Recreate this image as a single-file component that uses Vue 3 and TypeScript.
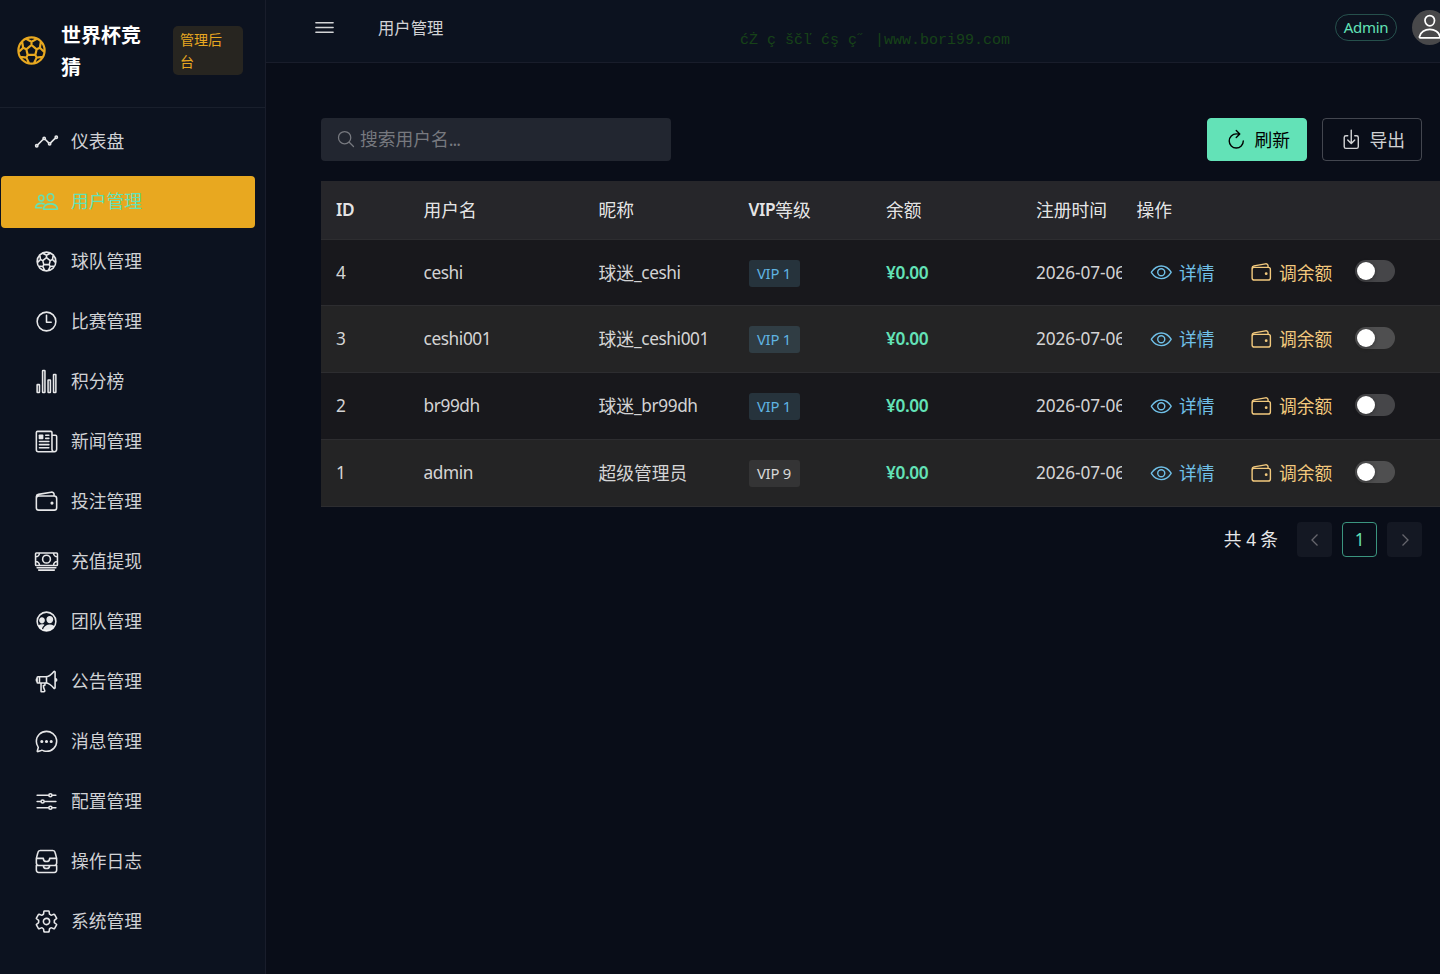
<script setup lang="ts">
import { ref } from 'vue'

interface Glyph {
  line: string
  fill?: string
  width?: number
}

interface User {
  id: number
  name: string
  nick: string
  vip: number
  balance: string
  created: string
}

const dot = (cx: number, cy: number, r: number): string =>
  `M${cx - r} ${cy}a${r} ${r} 0 1 0 ${2 * r} 0a${r} ${r} 0 1 0 ${-2 * r} 0z`

const glyphs: Record<string, Glyph> = {
  analytics: {
    line: 'M344 280l88-88M232 216l64 64M80 320l104-104' + dot(456, 168, 24) + dot(320, 304, 24) + dot(208, 192, 24) + dot(56, 344, 24),
  },
  people: {
    line: 'M402 168c-2.93 40.67-33.1 72-66 72s-63.12-31.32-66-72c-3-42.31 26.37-72 66-72s69 30.46 66 72zM336 304c-65.17 0-127.84 32.37-143.54 95.41-2.08 8.34 3.15 16.59 11.72 16.59h263.65c8.57 0 13.77-8.25 11.72-16.59C463.85 335.36 401.18 304 336 304zM200 185.94c-2.34 32.48-26.72 58.06-53 58.06s-50.7-25.57-53-58.06C91.61 152.15 115.34 128 147 128s55.39 24.77 53 57.94zM206 306c-18.05-8.27-37.93-11.45-59-11.45-52 0-102.1 25.85-114.65 76.2-1.65 6.66 2.53 13.25 9.37 13.25H154',
  },
  football: {
    line: dot(256, 256, 192) + 'M256 175l-76 64 20 81h112l20-81zM256 175v-47M177 86l79 42 79-42M332 239l46-23M393 128l-15 88 65 63M180 239l-46-23M119 128l15 88-65 63M312 320l19 40M420 347l-89 13-39 81M200 320l-19 40M92 347l89 13 39 81',
  },
  time: { line: dot(256, 256, 192) + 'M256 128v144h96' },
  chart: {
    line: 'M72 320h32a8 8 0 018 8v144a8 8 0 01-8 8H72a8 8 0 01-8-8V328a8 8 0 018-8zM296 224h32a8 8 0 018 8v240a8 8 0 01-8 8h-32a8 8 0 01-8-8V232a8 8 0 018-8zM408 112h32a8 8 0 018 8v352a8 8 0 01-8 8h-32a8 8 0 01-8-8V120a8 8 0 018-8zM184 32h32a8 8 0 018 8v432a8 8 0 01-8 8h-32a8 8 0 01-8-8V40a8 8 0 018-8z',
  },
  news: {
    line: 'M368 415.86V72a24.07 24.07 0 00-24-24H72a24.07 24.07 0 00-24 24v352a40.12 40.12 0 0040 40h328M416 464h0a48 48 0 01-48-48V128h72a24 24 0 0124 24v264a48 48 0 01-48 48zM240 128h64M240 192h64M112 256h192M112 320h192M112 384h192',
    fill: 'M176 208h-64a16 16 0 01-16-16v-64a16 16 0 0116-16h64a16 16 0 0116 16v64a16 16 0 01-16 16z',
  },
  wallet: {
    line: 'M96 144h320a48 48 0 0148 48v192a48 48 0 01-48 48H96a48 48 0 01-48-48V192a48 48 0 0148-48zM411.36 144v-30A50 50 0 00352 64.9L88.64 109.85A50 50 0 0048 159v49',
    fill: 'M368 320a32 32 0 1132-32 32 32 0 01-32 32z',
  },
  cash: {
    line: 'M48 80h416a16 16 0 0116 16v224a16 16 0 01-16 16H48a16 16 0 01-16-16V96a16 16 0 0116-16zM64 384h384M96 432h320M480 160a80 80 0 01-80-80M32 160a80 80 0 0080-80M480 256a80 80 0 00-80 80M32 256a80 80 0 0180 80' + dot(256, 208, 80),
  },
  team: {
    line: dot(256, 256, 192),
    fill: 'M323.67 292c-17.4 0-34.21-7.72-47.34-21.73a83.76 83.76 0 01-22-51.32c-1.47-20.7 4.88-39.75 17.88-53.62S303.38 144 323.67 144c20.14 0 38.37 7.62 51.33 21.46s19.47 33 18 53.51a84 84 0 01-22 51.3C357.86 284.28 341.06 292 323.67 292zM163.82 295.36c-29.76 0-55.93-27.51-58.33-61.33-1.23-17.32 4.15-33.33 15.17-45.08s26.22-18 43.15-18 32.12 6.44 43.07 18.14 16.5 27.82 15.25 45c-2.44 33.77-28.6 61.27-58.31 61.27zM420.37 355.28c-1.59-4.7-5.46-9.71-13.22-14.46-23.46-14.33-52.32-21.91-83.48-21.91-30.57 0-60.23 7.9-83.53 22.25-26.25 16.17-43.89 39.75-51 68.18-1.68 6.69-4.13 19.14-1.51 26.11a192.18 192.18 0 00232.75-80.17zM163.63 401.37c7.07-28.21 22.12-51.73 45.47-70.75a8 8 0 00-2.59-13.77c-12-3.83-25.7-5.88-42.69-5.88-23.82 0-49.11 6.45-68.14 18.17-5.4 3.33-10.7 4.61-14.78 5.75a192.84 192.84 0 0077.78 86.64l1.79-.14a102.82 102.82 0 013.16-20.02z',
  },
  megaphone: {
    line: 'M407.94 52.22S321.3 160 240 160H80a16 16 0 00-16 16v96a16 16 0 0016 16h160c81.3 0 167.94 108.23 167.94 108.23 6.06 8 24.06 2.52 24.06-9.83V62c0-12.31-17-18.82-24.06-9.78zM64 256s-16-6-16-32 16-32 16-32M448 246s16-4.33 16-22-16-22-16-22M256 160v128M112 160v128M144 288v168a8 8 0 008 8h53a16 16 0 0015.29-20.73C211.91 416.39 192 386.08 192 336h16a16 16 0 0016-16v-16a16 16 0 00-16-16h-16',
  },
  chat: {
    line: 'M87.48 380c1.2-4.38-1.43-10.47-3.94-14.86a42.63 42.63 0 00-2.54-3.8 199.81 199.81 0 01-33-110C47.64 139.09 140.72 48 255.82 48 356.2 48 440 117.54 459.57 209.85a199 199 0 014.43 41.64c0 112.41-89.49 204.93-204.59 204.93-18.31 0-43-4.6-56.47-8.37s-26.92-8.77-30.39-10.11a31.14 31.14 0 00-11.13-2.07 30.7 30.7 0 00-12.08 2.43L81.5 462.78a15.92 15.92 0 01-4.66 1.22 9.61 9.61 0 01-9.58-9.74 15.85 15.85 0 01.6-3.29z',
    fill: dot(160, 256, 32) + dot(256, 256, 32) + dot(352, 256, 32),
  },
  options: {
    line: 'M368 128h80M64 128h240M368 384h80M64 384h240M208 256h240M64 256h80' + dot(336, 128, 32) + dot(176, 256, 32) + dot(336, 384, 32),
  },
  tray: {
    line: 'M48 336v96a48.14 48.14 0 0048 48h320a48.14 48.14 0 0048-48v-96M48 336h144M320 336h144M192 336a64 64 0 00128 0M384 32H128c-26 0-43 14-48 40L48 192v96a48.14 48.14 0 0048 48h320a48.14 48.14 0 0048-48v-96L432 72c-5-27-23-40-48-40zM48 192h144M320 192h144M192 192a64 64 0 00128 0',
  },
  settings: {
    line: 'M262.29 192.31a64 64 0 1057.4 57.4 64.13 64.13 0 00-57.4-57.4zM416.39 256a154.34 154.34 0 01-1.53 20.79l45.21 35.46a10.81 10.81 0 012.45 13.75l-42.77 74a10.81 10.81 0 01-13.14 4.59l-44.9-18.08a16.11 16.11 0 00-15.17 1.75A164.48 164.48 0 01325 400.8a15.94 15.94 0 00-8.82 12.14l-6.73 47.89a11.08 11.08 0 01-10.68 9.17h-85.54a11.11 11.11 0 01-10.69-8.87l-6.72-47.82a16.07 16.07 0 00-9-12.22 155.3 155.3 0 01-21.46-12.57 16 16 0 00-15.11-1.71l-44.89 18.07a10.81 10.81 0 01-13.14-4.58l-42.77-74a10.8 10.8 0 012.45-13.75l38.21-30a16.05 16.05 0 006-14.08c-.36-4.17-.58-8.33-.58-12.5s.21-8.27.58-12.35a16 16 0 00-6.07-13.94l-38.19-30A10.81 10.81 0 0149.48 186l42.77-74a10.81 10.81 0 0113.14-4.59l44.9 18.08a16.11 16.11 0 0015.17-1.75A164.48 164.48 0 01187 111.2a15.94 15.94 0 008.82-12.14l6.73-47.89A11.08 11.08 0 01213.23 42h85.54a11.11 11.11 0 0110.69 8.87l6.72 47.82a16.07 16.07 0 009 12.22 155.3 155.3 0 0121.46 12.57 16 16 0 0015.11 1.71l44.89-18.07a10.81 10.81 0 0113.14 4.58l42.77 74a10.8 10.8 0 01-2.45 13.75l-38.21 30a16.05 16.05 0 00-6.05 14.08c.33 4.14.55 8.3.55 12.47z',
  },
}

const menu = [
  { icon: 'analytics', label: '仪表盘' },
  { icon: 'people', label: '用户管理' },
  { icon: 'football', label: '球队管理' },
  { icon: 'time', label: '比赛管理' },
  { icon: 'chart', label: '积分榜' },
  { icon: 'news', label: '新闻管理' },
  { icon: 'wallet', label: '投注管理' },
  { icon: 'cash', label: '充值提现' },
  { icon: 'team', label: '团队管理' },
  { icon: 'megaphone', label: '公告管理' },
  { icon: 'chat', label: '消息管理' },
  { icon: 'options', label: '配置管理' },
  { icon: 'tray', label: '操作日志' },
  { icon: 'settings', label: '系统管理' },
]
const active = ref('用户管理')

const users = ref<User[]>([
  { id: 4, name: 'ceshi', nick: '球迷_ceshi', vip: 1, balance: '¥0.00', created: '2026-07-06' },
  { id: 3, name: 'ceshi001', nick: '球迷_ceshi001', vip: 1, balance: '¥0.00', created: '2026-07-06' },
  { id: 2, name: 'br99dh', nick: '球迷_br99dh', vip: 1, balance: '¥0.00', created: '2026-07-06' },
  { id: 1, name: 'admin', nick: '超级管理员', vip: 9, balance: '¥0.00', created: '2026-07-06' },
])

// Splits a label into Latin and Chinese runs, which are set at different sizes.
const runs = (text: string): { text: string; latin: boolean }[] =>
  (text.match(/[\x20-\x7e]+|[^\x20-\x7e]+/g) ?? []).map((t) => ({ text: t, latin: /^[\x20-\x7e]/.test(t) }))
</script>

<template>
  <div class="app">
    <aside class="sidebar">
      <div class="brand">
        <svg class="brand-icon" viewBox="0 0 512 512"><path class="ln" :d="glyphs.football.line" /></svg>
        <div class="brand-name">世界杯竞猜</div>
        <div class="brand-tag">管理后台</div>
      </div>
      <nav class="menu">
        <a
          v-for="item in menu"
          :key="item.label"
          class="menu-item"
          :class="{ active: item.label === active }"
          @click="active = item.label"
        >
          <svg class="menu-icon" viewBox="0 0 512 512">
            <path class="ln" :d="glyphs[item.icon].line" />
            <path v-if="glyphs[item.icon].fill" class="fl" :d="glyphs[item.icon].fill" />
          </svg>
          <span>{{ item.label }}</span>
        </a>
      </nav>
    </aside>

    <section class="main">
      <header class="header">
        <svg class="burger" viewBox="0 0 512 512"><path class="ln" d="M80 160h352M80 256h352M80 352h352" /></svg>
        <span class="crumb">用户管理</span>
        <span class="watermark">ćŻ ç ščľ ćş ç˝ |www.bori99.com</span>
        <span class="role">Admin</span>
        <span class="avatar">
          <svg viewBox="0 0 512 512">
            <path class="ln" d="M344 144c-3.92 52.87-44 96-88 96s-84.15-43.12-88-96c-4-55 35-96 88-96s92 42 88 96zM256 304c-87 0-175.3 48-191.64 138.6C62.39 453.52 68.57 464 80 464h352c11.44 0 17.62-10.48 15.65-21.4C431.3 352 343 304 256 304z" />
          </svg>
        </span>
      </header>

      <div class="content">
        <div class="toolbar">
          <label class="search">
            <svg viewBox="0 0 512 512"><path class="ln" d="M221.09 64a157.09 157.09 0 10157.09 157.09A157.1 157.1 0 00221.09 64zM338.29 338.29L448 448" /></svg>
            <span>搜索用户名<span class="dots">...</span></span>
          </label>
          <button class="btn primary">
            <svg viewBox="0 0 512 512"><path class="ln" d="M320 146s24.36-12-64-12a160 160 0 10160 160M256 58l80 80-80 80" /></svg>
            <span>刷新</span>
          </button>
          <button class="btn">
            <svg viewBox="0 0 512 512"><path class="ln" d="M336 176h40a40 40 0 0140 40v208a40 40 0 01-40 40H136a40 40 0 01-40-40V216a40 40 0 0140-40h40M176 272l80 80 80-80M256 48v288" /></svg>
            <span>导出</span>
          </button>
        </div>

        <div class="table">
          <div class="row head">
            <div class="cell"><b class="lat">ID</b></div>
            <div class="cell">用户名</div>
            <div class="cell">昵称</div>
            <div class="cell"><b class="lat">VIP</b>等级</div>
            <div class="cell">余额</div>
            <div class="cell">注册时间</div>
            <div class="cell">操作</div>
          </div>
          <div v-for="u in users" :key="u.id" class="row">
            <div class="cell lat">{{ u.id }}</div>
            <div class="cell lat">{{ u.name }}</div>
            <div class="cell">
              <span v-for="(r, i) in runs(u.nick)" :key="i" :class="{ lat: r.latin }">{{ r.text }}</span>
            </div>
            <div class="cell"><span class="tag" :class="{ plain: u.vip > 8 }">VIP {{ u.vip }}</span></div>
            <div class="cell lat money">{{ u.balance }}</div>
            <div class="cell lat date">{{ u.created }}</div>
            <div class="cell ops">
              <a class="op info">
                <svg viewBox="0 0 512 512">
                  <path class="ln" d="M255.66 112c-77.94 0-157.89 45.11-220.83 135.33a16 16 0 00-.27 17.77C82.92 340.8 161.8 400 255.66 400c92.84 0 173.34-59.38 221.79-135.25a16.14 16.14 0 000-17.47C428.89 172.28 347.8 112 255.66 112z" />
                  <circle class="ln" cx="256" cy="256" r="80" />
                </svg>
                <span>详情</span>
              </a>
              <a class="op warn">
                <svg viewBox="0 0 512 512">
                  <path class="ln" :d="glyphs.wallet.line" />
                  <path class="fl" :d="glyphs.wallet.fill" />
                </svg>
                <span>调余额</span>
              </a>
              <span class="switch"><i></i></span>
            </div>
          </div>
        </div>

        <div class="pager">
          <span class="total">共 <span class="lat">4</span> 条</span>
          <span class="page off"><svg viewBox="0 0 16 16"><path d="M10.5 2.5L5 8l5.5 5.5" /></svg></span>
          <span class="page on lat">1</span>
          <span class="page off"><svg viewBox="0 0 16 16"><path d="M5.5 2.5L11 8l-5.5 5.5" /></svg></span>
        </div>
      </div>
    </section>
  </div>
</template>

<style>
html,
body {
  margin: 0;
  background: #090d18;
  overflow: hidden;
}
</style>

<style scoped>
.app {
  display: flex;
  width: 1440px;
  height: 974px;
  overflow: hidden;
  background: #090d18;
  color: rgba(255, 255, 255, 0.82);
  font-family: 'Noto Sans', 'Noto Sans CJK SC', sans-serif;
  font-size: 17.75px;
  line-height: 28px;
  box-sizing: border-box;
}
.app * {
  box-sizing: border-box;
}
.ln {
  fill: none;
  stroke: currentColor;
  stroke-width: 32;
  stroke-linecap: round;
  stroke-linejoin: round;
}
.fl {
  fill: currentColor;
}
.lat {
  font-size: 17.25px;
  letter-spacing: -0.4px;
}
svg {
  display: block;
  flex: none;
}

.sidebar {
  flex: none;
  width: 266px;
  background: #0c121f;
  border-right: 1px solid #191d2b;
}
.brand {
  display: flex;
  align-items: center;
  height: 108px;
  padding: 0 22px 7px 14px;
  border-bottom: 1px solid #191f2c;
}
.brand-icon {
  width: 35px;
  height: 35px;
  color: #e8a820;
}
.brand-name {
  width: 82px;
  margin-left: 12px;
  padding-top: 4px;
  color: #fff;
  font-size: 20px;
  font-weight: 700;
  line-height: 32px;
}
.brand-tag {
  width: 70px;
  height: 49px;
  margin-left: auto;
  padding: 3px 14px 2px 7px;
  border-radius: 5px;
  background: #272520;
  color: #e8a820;
  font-size: 14px;
  line-height: 22px;
}
.menu {
  display: flex;
  flex-direction: column;
  gap: 8px;
  padding: 8px 10px 0 1px;
}
.menu-item {
  display: flex;
  align-items: center;
  gap: 12px;
  height: 52px;
  padding: 0 0 2px 33px;
  border-radius: 4px;
}
.menu-icon {
  width: 25px;
  height: 25px;
  color: rgba(255, 255, 255, 0.9);
}
.menu-item.active {
  background: #e8a820;
  color: #63e2b7;
}
.active .menu-icon {
  color: #63e2b7;
}

.main {
  flex: 1;
  min-width: 0;
}
.header {
  position: relative;
  display: flex;
  align-items: center;
  height: 63px;
  padding: 0 0 8px 46px;
  background: #0c121f;
  border-bottom: 1px solid #191d2b;
}
.burger {
  width: 25px;
  height: 25px;
}
.crumb {
  margin-left: 41px;
  padding-top: 2px;
  font-size: 16.35px;
}
.watermark {
  position: absolute;
  left: 474px;
  top: 31px;
  color: #174218;
  font-family: 'Liberation Mono', monospace;
  font-size: 15px;
  line-height: 20px;
  white-space: pre;
}
.role {
  width: 62px;
  height: 27px;
  margin-left: auto;
  border: 1px solid rgba(99, 226, 183, 0.3);
  border-radius: 14px;
  color: #63e2b7;
  font-size: 15px;
  letter-spacing: -0.3px;
  line-height: 25px;
  text-align: center;
}
.avatar {
  display: flex;
  align-items: center;
  justify-content: center;
  flex: none;
  width: 35px;
  height: 35px;
  margin: 0 -7px 0 15px;
  border-radius: 50%;
  background: #48484a;
  color: #fff;
}
.avatar svg {
  width: 27.5px;
  height: 27.5px;
}

.content {
  padding: 55px 0 0 55px;
}
.toolbar {
  display: flex;
  gap: 15px;
  padding-right: 18px;
}
.search {
  display: flex;
  align-items: center;
  gap: 4px;
  width: 350px;
  height: 43px;
  margin-right: auto;
  padding: 0 0 1px 15px;
  border-radius: 4px;
  background: #222630;
  color: #77797f;
}
.search svg {
  width: 20px;
  height: 20px;
}
.dots {
  letter-spacing: -1px;
}
.btn {
  display: flex;
  align-items: center;
  justify-content: center;
  gap: 7px;
  width: 100px;
  height: 43px;
  padding: 0 0 0 1px;
  border: 1px solid rgba(255, 255, 255, 0.24);
  border-radius: 4px;
  background: transparent;
  color: rgba(255, 255, 255, 0.82);
  font: inherit;
}
.btn svg {
  width: 22.5px;
  height: 22.5px;
}
.btn.primary {
  border-color: #63e2b7;
  background: #63e2b7;
  color: #000;
}

.table {
  margin-top: 20px;
}
.row {
  display: grid;
  grid-template-columns: 87.5px 175px 150px 137.5px 150px 100.5px 1fr;
  height: 67px;
  background: #18181c;
  border-bottom: 1px solid #2d2d30;
}
.row:nth-child(2) {
  height: 66px;
}
.row:nth-child(odd) {
  background: #242425;
}
.row.head {
  height: 59px;
  background: #26262a;
  color: rgba(255, 255, 255, 0.9);
}
.head b {
  font-weight: 600;
}
.cell {
  display: flex;
  align-items: center;
  padding-left: 15px;
  white-space: nowrap;
}
.tag {
  width: 51px;
  height: 27px;
  margin-top: 1px;
  border-radius: 3px;
  background: rgba(112, 192, 232, 0.16);
  color: #5fb4e2;
  font-size: 14.8px;
  letter-spacing: -0.2px;
  line-height: 27px;
  text-align: center;
}
.tag.plain {
  background: #343435;
  color: rgba(255, 255, 255, 0.82);
}
.money {
  color: #63e2b7;
  font-weight: 600;
}
.date {
  overflow: hidden;
  letter-spacing: -0.1px;
}
.ops {
  padding-left: 28px;
}
.op {
  display: flex;
  align-items: center;
  gap: 7px;
}
.op svg {
  width: 22.5px;
  height: 22.5px;
}
.info {
  width: 100px;
  color: #70c0e8;
}
.warn {
  width: 105.5px;
  color: #f2c97d;
}
.switch {
  width: 40px;
  height: 22px;
  margin-bottom: 3px;
  padding: 2px;
  border-radius: 11px;
  background: rgba(255, 255, 255, 0.2);
}
.switch i {
  display: block;
  width: 18px;
  height: 18px;
  border-radius: 50%;
  background: #fff;
  box-shadow: 0 1px 4px rgba(0, 0, 0, 0.35);
}

.pager {
  display: flex;
  justify-content: flex-end;
  align-items: center;
  gap: 10px;
  margin-top: 15px;
  padding-right: 18px;
}
.total {
  margin-right: 9px;
  color: #e6e7e8;
}
.page {
  display: flex;
  align-items: center;
  justify-content: center;
  width: 35px;
  height: 35px;
  border-radius: 4px;
}
.page.off {
  background: #141823;
}
.page.on {
  border: 1px solid #3b957f;
  color: #63e2b7;
}
.page svg {
  width: 16px;
  height: 16px;
  fill: none;
  stroke: #66666d;
  stroke-width: 1.3;
}
</style>
